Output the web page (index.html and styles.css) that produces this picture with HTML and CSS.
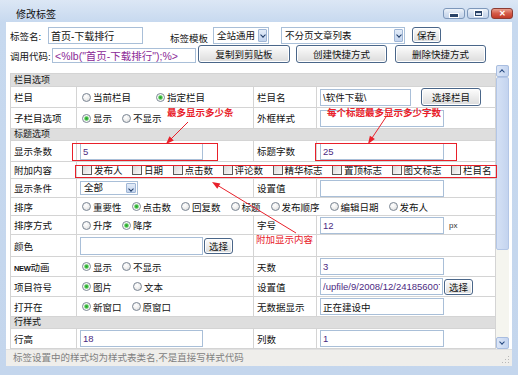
FILE: index.html
```html
<!DOCTYPE html>
<html lang="zh-CN">
<head>
    <meta charset="UTF-8">
    <title>修改标签</title>
    <link rel="stylesheet" href="styles.css">
</head>
<body>
    <div class="window">
        <div class="titlebar">
            <span class="title">修改标签</span>
            <div class="wctl">
                <span class="wbtn min"><i></i></span>
                <span class="wbtn max"><i></i></span>
                <span class="wbtn close">✕</span>
            </div>
        </div>

        <div class="client">
            <div class="form">
                <div class="frow top">
                    <span class="flbl w38">标签名:</span>
                    <input class="fin w95" type="text" value="首页-下载排行">
                    <span class="flbl tpl">标签模板</span>
                    <span class="sel s1">全站通用<b class="arr"></b></span>
                    <span class="sel s2">不分页文章列表<b class="arr"></b></span>
                    <button class="btn save">保存</button>
                </div>
                <div class="frow code">
                    <span class="flbl w42">调用代码:</span>
                    <input class="fin w144 purple" type="text" value='<%lb("首页-下载排行");%>'>
                    <button class="btn b1">复制到剪贴板</button>
                    <button class="btn b2">创建快捷方式</button>
                    <button class="btn b3">删除快捷方式</button>
                </div>
            </div>

            <div class="scroll">
                <div class="pane">
                    <table class="grid">
                        <colgroup>
                            <col class="c1"><col class="c2"><col class="c3"><col class="c4">
                        </colgroup>
                        <tr class="sec"><td colspan="4">栏目选项</td></tr>
                        <tr>
                            <td>栏目</td>
                            <td class="opts wide"><span class="opt"><i class="rd"></i>当前栏目</span><span class="opt"><i class="rd on"></i>指定栏目</span></td>
                            <td>栏目名</td>
                            <td class="fld"><input class="fin w91 dark" type="text" value="\软件下载\"><button class="btn pick">选择栏目</button></td>
                        </tr>
                        <tr>
                            <td>子栏目选项</td>
                            <td class="opts"><span class="opt"><i class="rd on"></i>显示</span><span class="opt"><i class="rd"></i>不显示</span></td>
                            <td>外框样式</td>
                            <td class="fld"><input class="fin w124" type="text" value=""></td>
                        </tr>
                        <tr class="sec"><td colspan="4">标题选项</td></tr>
                        <tr>
                            <td>显示条数</td>
                            <td class="fld"><input class="fin w123 val" type="text" value="5"></td>
                            <td>标题字数</td>
                            <td class="fld"><input class="fin w124 val" type="text" value="25"></td>
                        </tr>
                        <tr class="r17">
                            <td>附加内容</td>
                            <td class="opts" colspan="3"><span class="opt cb"><i class="ck"></i>发布人</span><span class="opt cb"><i class="ck"></i>日期</span><span class="opt cb"><i class="ck"></i>点击数</span><span class="opt cb"><i class="ck"></i>评论数</span><span class="opt cb"><i class="ck"></i>精华标志</span><span class="opt cb"><i class="ck"></i>置顶标志</span><span class="opt cb"><i class="ck"></i>图文标志</span><span class="opt cb"><i class="ck"></i>栏目名</span></td>
                        </tr>
                        <tr class="r19">
                            <td>显示条件</td>
                            <td class="fld"><span class="sel s3">全部<b class="arr"></b></span></td>
                            <td>设置值</td>
                            <td class="fld"><input class="fin w124" type="text" value=""></td>
                        </tr>
                        <tr class="r18">
                            <td>排序</td>
                            <td class="opts" colspan="3"><span class="opt"><i class="rd"></i>重要性</span><span class="opt"><i class="rd on"></i>点击数</span><span class="opt"><i class="rd"></i>回复数</span><span class="opt"><i class="rd"></i>标题</span><span class="opt"><i class="rd"></i>发布顺序</span><span class="opt"><i class="rd"></i>编辑日期</span><span class="opt"><i class="rd"></i>发布人</span></td>
                        </tr>
                        <tr class="r19">
                            <td>排序方式</td>
                            <td class="opts"><span class="opt"><i class="rd"></i>升序</span><span class="opt"><i class="rd on"></i>降序</span></td>
                            <td>字号</td>
                            <td class="fld"><input class="fin w124 val" type="text" value="12"><span class="unit">px</span></td>
                        </tr>
                        <tr class="r22">
                            <td>颜色</td>
                            <td class="fld"><input class="fin w123 tall" type="text" value=""><button class="btn choose">选择</button></td>
                            <td></td>
                            <td></td>
                        </tr>
                        <tr class="r20">
                            <td><span class="new">NEW</span>动画</td>
                            <td class="opts"><span class="opt"><i class="rd on"></i>显示</span><span class="opt"><i class="rd"></i>不显示</span></td>
                            <td>天数</td>
                            <td class="fld"><input class="fin w124 val" type="text" value="3"></td>
                        </tr>
                        <tr class="r20">
                            <td>项目符号</td>
                            <td class="opts mid"><span class="opt"><i class="rd on"></i>图片</span><span class="opt"><i class="rd"></i>文本</span></td>
                            <td>设置值</td>
                            <td class="fld"><input class="fin w123 val" type="text" value="/upfile/9/2008/12/2418560072.gif"><button class="btn choose">选择</button></td>
                        </tr>
                        <tr class="r20">
                            <td>打开在</td>
                            <td class="opts"><span class="opt"><i class="rd on"></i>新窗口</span><span class="opt"><i class="rd"></i>原窗口</span></td>
                            <td>无数据显示</td>
                            <td class="fld"><input class="fin w124" type="text" value="正在建设中"></td>
                        </tr>
                        <tr class="sec"><td colspan="4">行样式</td></tr>
                        <tr class="r20">
                            <td>行高</td>
                            <td class="fld"><input class="fin w123 val" type="text" value="18"></td>
                            <td>列数</td>
                            <td class="fld"><input class="fin w124 val" type="text" value="1"></td>
                        </tr>
                    </table>
                </div>
                <div class="vbar">
                    <span class="sbtn up"></span>
                    <span class="thumb"></span>
                    <span class="track"></span>
                    <span class="sbtn down"></span>
                </div>
            </div>

            <div class="status">标签设置中的样式均为样式表类名,不是直接写样式代码<span class="grip"></span></div>
        </div>

        <!-- 注释标记 -->
        <div class="mark m1"></div>
        <div class="mark m2"></div>
        <div class="mark m3"></div>
        <span class="note n1">最多显示多少条</span>
        <span class="note n2">每个标题最多显示多少字数</span>
        <span class="note n3">附加显示内容</span>
        <svg class="arrows" width="518" height="375" viewBox="0 0 518 375">
            <line x1="188" y1="122" x2="170" y2="140" stroke="#e8202a" stroke-width="1"/>
            <polygon points="166,144 173.8,140.5 169.5,136.2" fill="#e8202a"/>
            <line x1="386" y1="117" x2="371" y2="139.5" stroke="#e8202a" stroke-width="1"/>
            <polygon points="368,144 374.9,139 369.9,135.7" fill="#e8202a"/>
            <line x1="296" y1="233" x2="217" y2="185" stroke="#e8202a" stroke-width="1"/>
            <polygon points="212,182 220.4,183.6 217.3,188.8" fill="#e8202a"/>
        </svg>
    </div>
</body>
</html>
```

FILE: styles.css
```css
* {
    box-sizing: border-box;
}
body {
    margin: 0;
    width: 518px;
    height: 375px;
    overflow: hidden;
    font-family: "Liberation Sans", "Noto Sans CJK SC", sans-serif;
    font-size: 9.5px;
    color: #111;
}
.window {
    position: relative;
    width: 518px;
    height: 375px;
    display: flex;
    flex-direction: column;
    padding: 0 6px 9px;
    background: linear-gradient(to bottom, #dce7f5 0, #c7d9ef 22px, #c4d6ed 100%);
}

/* title bar */
.titlebar {
    height: 22px;
    display: flex;
    align-items: flex-start;
}
.title {
    padding: 6px 0 0 10px;
    font-size: 10px;
    color: #111;
}
.wctl {
    margin: 8px -1px 0 auto;
    display: flex;
    gap: 2px;
}
.wbtn {
    width: 22px;
    height: 11px;
    border: 1px solid #7d97ba;
    border-radius: 3px;
    background: linear-gradient(to bottom, #eef3fa, #d3dff0 50%, #c3d3ea);
    display: flex;
    align-items: center;
    justify-content: center;
}
.wbtn.min i {
    width: 8px;
    height: 3px;
    margin-top: 3px;
    background: #2b4468;
    border: 1px solid #fff;
    box-sizing: content-box;
}
.wbtn.max i {
    width: 7px;
    height: 5px;
    border: 1px solid #2b4468;
    border-top-width: 2px;
    box-shadow: 0 0 0 1px #fff;
}
.wbtn.close {
    border-color: #8c3b33;
    background: linear-gradient(to bottom, #eaa08f, #d45a48 50%, #c23a28);
    color: #fff;
    font-size: 8px;
    font-weight: bold;
    line-height: 1;
}

/* client area */
.client {
    flex: 1;
    background: #fff;
    display: flex;
    flex-direction: column;
}
.form {
    height: 43px;
    padding: 5px 0 0 4px;
}
.frow {
    display: flex;
}
.frow.top {
    height: 17px;
    align-items: center;
}
.frow.code {
    height: 18px;
    margin-top: 1px;
    align-items: flex-end;
}
.flbl {
    white-space: nowrap;
}
.w38 { width: 38px; }
.w42 { width: 42px; }
.tpl {
    margin: 4px 0 0 27px;
    width: 43px;
}
.fin {
    height: 17px;
    border: 1px solid #a9bfd8;
    padding: 0 2px;
    font: inherit;
    color: #111;
    background: #fff;
    outline: none;
}
.w95 { width: 95px; font-size: 10px; }
.w144 { width: 144px; height: 15px; }
.w91 { width: 91px; }
.w123 { width: 123px; }
.w124 { width: 124px; }
.fin.tall { height: 18px; }
.purple { color: #8a2896; font-size: 10.5px; }
.val { color: #4d2a82; }
.dark { color: #111; }

.sel {
    position: relative;
    display: inline-block;
    height: 17px;
    line-height: 15px;
    padding-left: 3px;
    border: 1px solid #a9bfd8;
    background: #fff;
    white-space: nowrap;
}
.sel .arr {
    position: absolute;
    right: 1px;
    top: 1px;
    bottom: 1px;
    width: 9px;
    border: 1px solid #9fb6d6;
    border-radius: 1px;
    background: linear-gradient(to bottom, #e3ecf8, #c3d4ee);
}
.sel .arr::after {
    content: "";
    position: absolute;
    left: 2px;
    top: 3px;
    width: 3px;
    height: 3px;
    border-right: 1.5px solid #1f3b66;
    border-bottom: 1.5px solid #1f3b66;
    transform: rotate(45deg);
}
.s1 { width: 56px; }
.s2 { width: 124px; margin-left: 12px; }
.s3 { width: 58px; height: 14px; line-height: 12px; }
.s3 .arr { width: 10px; }

.btn {
    height: 18px;
    padding: 0;
    border: 1px solid #4a6689;
    border-radius: 3px;
    background: linear-gradient(to bottom, #fdfdfd, #ececec 50%, #dcdcdc);
    font: inherit;
    color: #111;
    box-shadow: inset 0 0 0 1px #fff;
}
.save { width: 29px; height: 16px; margin-left: 7px; align-self: flex-start; }
.b1 { width: 92px; margin-left: 2px; }
.b2 { width: 91px; margin-left: 6px; }
.b3 { width: 91px; margin-left: 8px; }
.pick { width: 60px; margin-left: 10px; }
.choose { width: 29px; height: 16px; margin-left: 1px; font-size: 10px; }

/* scrolling panel */
.scroll {
    height: 284px;
    display: flex;
}
.pane {
    flex: 1;
    overflow: hidden;
    padding: 8px 0 0 4px;
}
.grid {
    width: 485px;
    border-collapse: collapse;
    table-layout: fixed;
}
.c1 { width: 66px; }
.c2 { width: 177px; }
.c3 { width: 63px; }
.c4 { width: 179px; }
.grid td {
    height: 21px;
    padding: 0 0 0 3px;
    border: 1px solid #d4d4d4;
    white-space: nowrap;
    vertical-align: middle;
    overflow: hidden;
}
.grid tr.sec td {
    height: 12px;
    line-height: 11px;
    background: #dedede;
    font-size: 9px;
}
.grid tr.sec:first-child td { height: 13px; }
.grid tr.r17 td { height: 17px; }
.grid tr.r18 td { height: 18px; }
.grid tr.r19 td { height: 19px; }
.grid tr.r20 td { height: 20px; }
.grid tr.r22 td { height: 22px; }
.grid td.fld {
    font-size: 0;
}
.grid td.fld > * {
    font-size: 9.5px;
    vertical-align: middle;
}
.unit {
    margin-left: 5px;
    font-size: 8px !important;
    color: #333;
}
.opts {
    padding-left: 5px !important;
}
.opt {
    display: inline-flex;
    align-items: center;
    margin-right: 10px;
}
.wide .opt { margin-right: 25px; }
.mid .opt { margin-right: 21px; }
.opt.cb { margin-right: 9.5px; }
.rd {
    width: 9px;
    height: 9px;
    margin-right: 2px;
    border-radius: 50%;
    border: 1px solid #7c8795;
    background: radial-gradient(circle at 40% 35%, #fff 0, #f2f2f2 40%, #d5d5d5 100%);
}
.rd.on {
    background: radial-gradient(circle, #1e9e28 0, #4cc24c 1.6px, #dff3df 2.6px, #fff 3.2px);
}
.ck {
    width: 10px;
    height: 10px;
    margin-right: 2px;
    border: 1px solid #5a5a5a;
    background: linear-gradient(135deg, #d8d8d8, #fafafa);
}
.new {
    font-size: 7.5px;
    font-weight: bold;
    letter-spacing: -0.3px;
}

/* scrollbar */
.vbar {
    width: 13px;
    margin-right: 3px;
    display: flex;
    flex-direction: column;
    background: #f5f5ef;
}
.sbtn {
    position: relative;
    height: 12px;
    border: 1px solid #a8bde0;
    border-radius: 2px;
    background: linear-gradient(to right, #dce6f7, #c3d4f0);
}
.sbtn::after {
    content: "";
    position: absolute;
    left: 3px;
    width: 3px;
    height: 3px;
    border-left: 1.5px solid #22467e;
    border-top: 1.5px solid #22467e;
}
.sbtn.up::after { top: 4px; transform: rotate(45deg); }
.sbtn.down::after { top: 2px; transform: rotate(225deg); }
.thumb {
    height: 173px;
    border: 1px solid #b3c6e6;
    border-radius: 2px;
    background: linear-gradient(to right, #d5e1f5, #c4d4ef);
}
.track {
    flex: 1;
}

/* status bar */
.status {
    position: relative;
    height: 17px;
    line-height: 16px;
    padding-left: 7px;
    background: #efeeeb;
    border-top: 1px solid #e0e0e0;
    color: #808080;
}
.grip {
    position: absolute;
    right: 3px;
    bottom: 3px;
    width: 8px;
    height: 8px;
    background: radial-gradient(circle, #b8b8b8 0.8px, transparent 1px) 0 0 / 3px 3px;
    clip-path: polygon(100% 0, 100% 100%, 0 100%);
}

/* annotations */
.mark {
    position: absolute;
    border: 1px solid #e8202a;
}
.m1 { left: 72px; top: 143px; width: 146px; height: 18px; }
.m2 { left: 315px; top: 143px; width: 142px; height: 18px; }
.m3 { left: 75px; top: 165px; width: 422px; height: 13px; }
.note {
    position: absolute;
    color: #e8202a;
    font-size: 9.5px;
    line-height: 12px;
    white-space: nowrap;
}
.n1 { left: 167px; top: 107px; font-weight: bold; }
.n2 { left: 327px; top: 107px; font-weight: bold; }
.n3 { left: 256px; top: 234px; }
.arrows {
    position: absolute;
    left: 0;
    top: 0;
    pointer-events: none;
}
```
